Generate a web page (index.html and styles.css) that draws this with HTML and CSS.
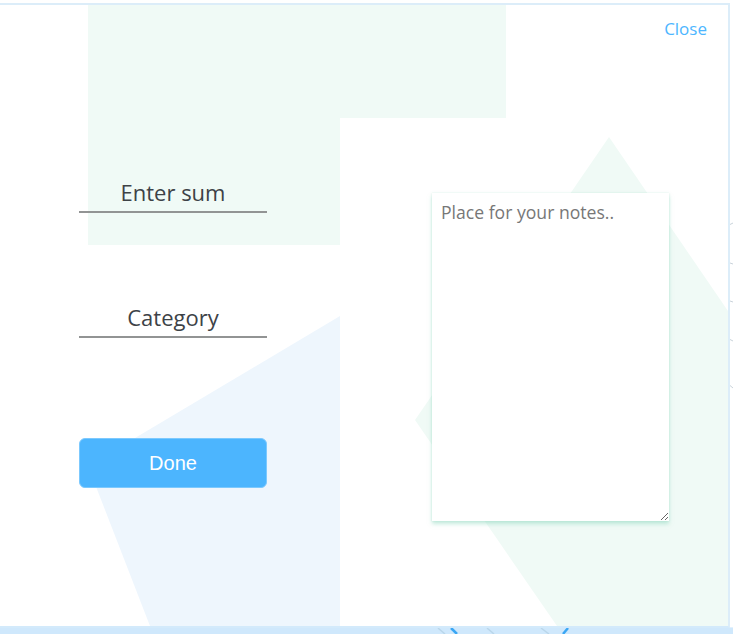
FILE: index.html
```html
<!DOCTYPE html>
<html lang="en">
<head>
<meta charset="utf-8">
<title>Add expense</title>
<link rel="stylesheet" href="styles.css">
</head>
<body>
<div class="backdrop">
  <svg class="backdrop-art" width="733" height="634" viewBox="0 0 733 634" aria-hidden="true">
    <rect x="0" y="0" width="733" height="634" fill="#ffffff"/>
    <rect x="0" y="627" width="733" height="7" fill="#cfe8fc"/>
    <rect x="0" y="627" width="733" height="1" fill="#e2f1fd"/>
    <g stroke="#c9d3da" stroke-width="1">
      <line x1="727" y1="226" x2="733" y2="223"/>
      <line x1="727" y1="262" x2="733" y2="264"/>
      <line x1="727" y1="300" x2="733" y2="302"/>
      <line x1="727" y1="338" x2="733" y2="341"/>
      <line x1="727" y1="383" x2="733" y2="388"/>
    </g>
    <line x1="729" y1="466" x2="729" y2="476" stroke="#6ec1fb" stroke-width="2"/>
    <g stroke-width="1.5">
      <line x1="438" y1="628" x2="445" y2="634" stroke="#b9d6ea"/>
      <line x1="451" y1="628" x2="457" y2="634" stroke="#3aa6f4" stroke-width="2.5"/>
      <line x1="487" y1="628" x2="494" y2="634" stroke="#b9d6ea"/>
      <line x1="541" y1="628" x2="549" y2="634" stroke="#b9d6ea"/>
      <line x1="568" y1="628" x2="563" y2="634" stroke="#3aa6f4" stroke-width="2.5"/>
    </g>
  </svg>
  <div class="modal">
    <svg class="modal-art" width="728" height="621" viewBox="0 5 728 621" aria-hidden="true">
      <polygon points="88,5 506,5 506,118 340,118 340,245 88,245" fill="#f0faf6"/>
      <polygon points="340,316 88,466 150,626 340,626" fill="#eef6fd"/>
      <polygon points="609,137 728,311 728,626 557,626 415,420" fill="#f0faf6"/>
    </svg>
    <div class="modal-header">
      <a class="close-link" href="#">Close</a>
    </div>
    <div class="modal-body">
      <div class="form-col">
        <input class="field" type="text" placeholder="Enter sum">
        <input class="field field-gap" type="text" placeholder="Category">
        <button class="done-btn" type="button">Done</button>
      </div>
      <textarea class="notes" placeholder="Place for your notes.."></textarea>
    </div>
  </div>
</div>
</body>
</html>
```

FILE: styles.css
```css
html, body {
  margin: 0;
  padding: 0;
}

body {
  width: 733px;
  height: 634px;
  overflow: hidden;
  background: #ffffff;
  font-family: "Open Sans", "Noto Sans", sans-serif;
}

.backdrop {
  position: relative;
  width: 733px;
  height: 634px;
  padding-top: 3px;
  box-sizing: border-box;
}

.backdrop-art {
  position: absolute;
  left: 0;
  top: 0;
  z-index: 0;
}

.modal {
  position: relative;
  z-index: 1;
  width: 728px;
  height: 621px;
  background: #ffffff;
  border-top: 2px solid #dcedf9;
  border-right: 2px solid #dcedf9;
  border-bottom: 2px solid #d3eafb;
}

.modal-art {
  position: absolute;
  left: 0;
  top: 0;
  z-index: 0;
}

.modal-header {
  position: relative;
  z-index: 1;
  display: flex;
  justify-content: flex-end;
  padding: 13px 21px 0 0;
  height: 22px;
}

.close-link {
  font-family: "Open Sans", sans-serif;
  font-size: 17px;
  line-height: 22px;
  color: #4db6ff;
  text-decoration: none;
}

.modal-body {
  position: relative;
  z-index: 1;
  display: flex;
  align-items: flex-start;
  gap: 165px;
  margin-top: 137px;
  padding-left: 79px;
}

.form-col {
  display: flex;
  flex-direction: column;
  width: 188px;
}

.field {
  box-sizing: border-box;
  width: 188px;
  height: 36px;
  padding: 0 0 5px 0;
  margin: 0;
  border: none;
  border-bottom: 2px solid #929494;
  background: transparent;
  font-family: "Open Sans", sans-serif;
  font-size: 22px;
  color: #3a3f44;
  text-align: center;
  outline: none;
}

.field::placeholder {
  color: #3d4247;
  opacity: 1;
}

.field-gap {
  margin-top: 89px;
}

.done-btn {
  box-sizing: border-box;
  margin-top: 100px;
  width: 188px;
  height: 50px;
  border: 1px solid #7cc9fe;
  border-radius: 6px;
  background: #4cb5fe;
  color: #ffffff;
  font-family: "Liberation Sans", Arial, sans-serif;
  font-size: 20px;
  padding: 0;
}

.notes {
  box-sizing: border-box;
  margin: 16px 0 0 0;
  width: 237px;
  height: 328px;
  padding: 7px 9px;
  border: none;
  background: #ffffff;
  box-shadow: 0 3px 4px rgba(140, 215, 190, 0.5), 0 0 2px rgba(120, 200, 175, 0.25);
  font-family: "Open Sans", sans-serif;
  font-size: 17.6px;
  line-height: 24px;
  color: #333;
  outline: none;
}

.notes::placeholder {
  color: #777777;
  opacity: 1;
}
```
